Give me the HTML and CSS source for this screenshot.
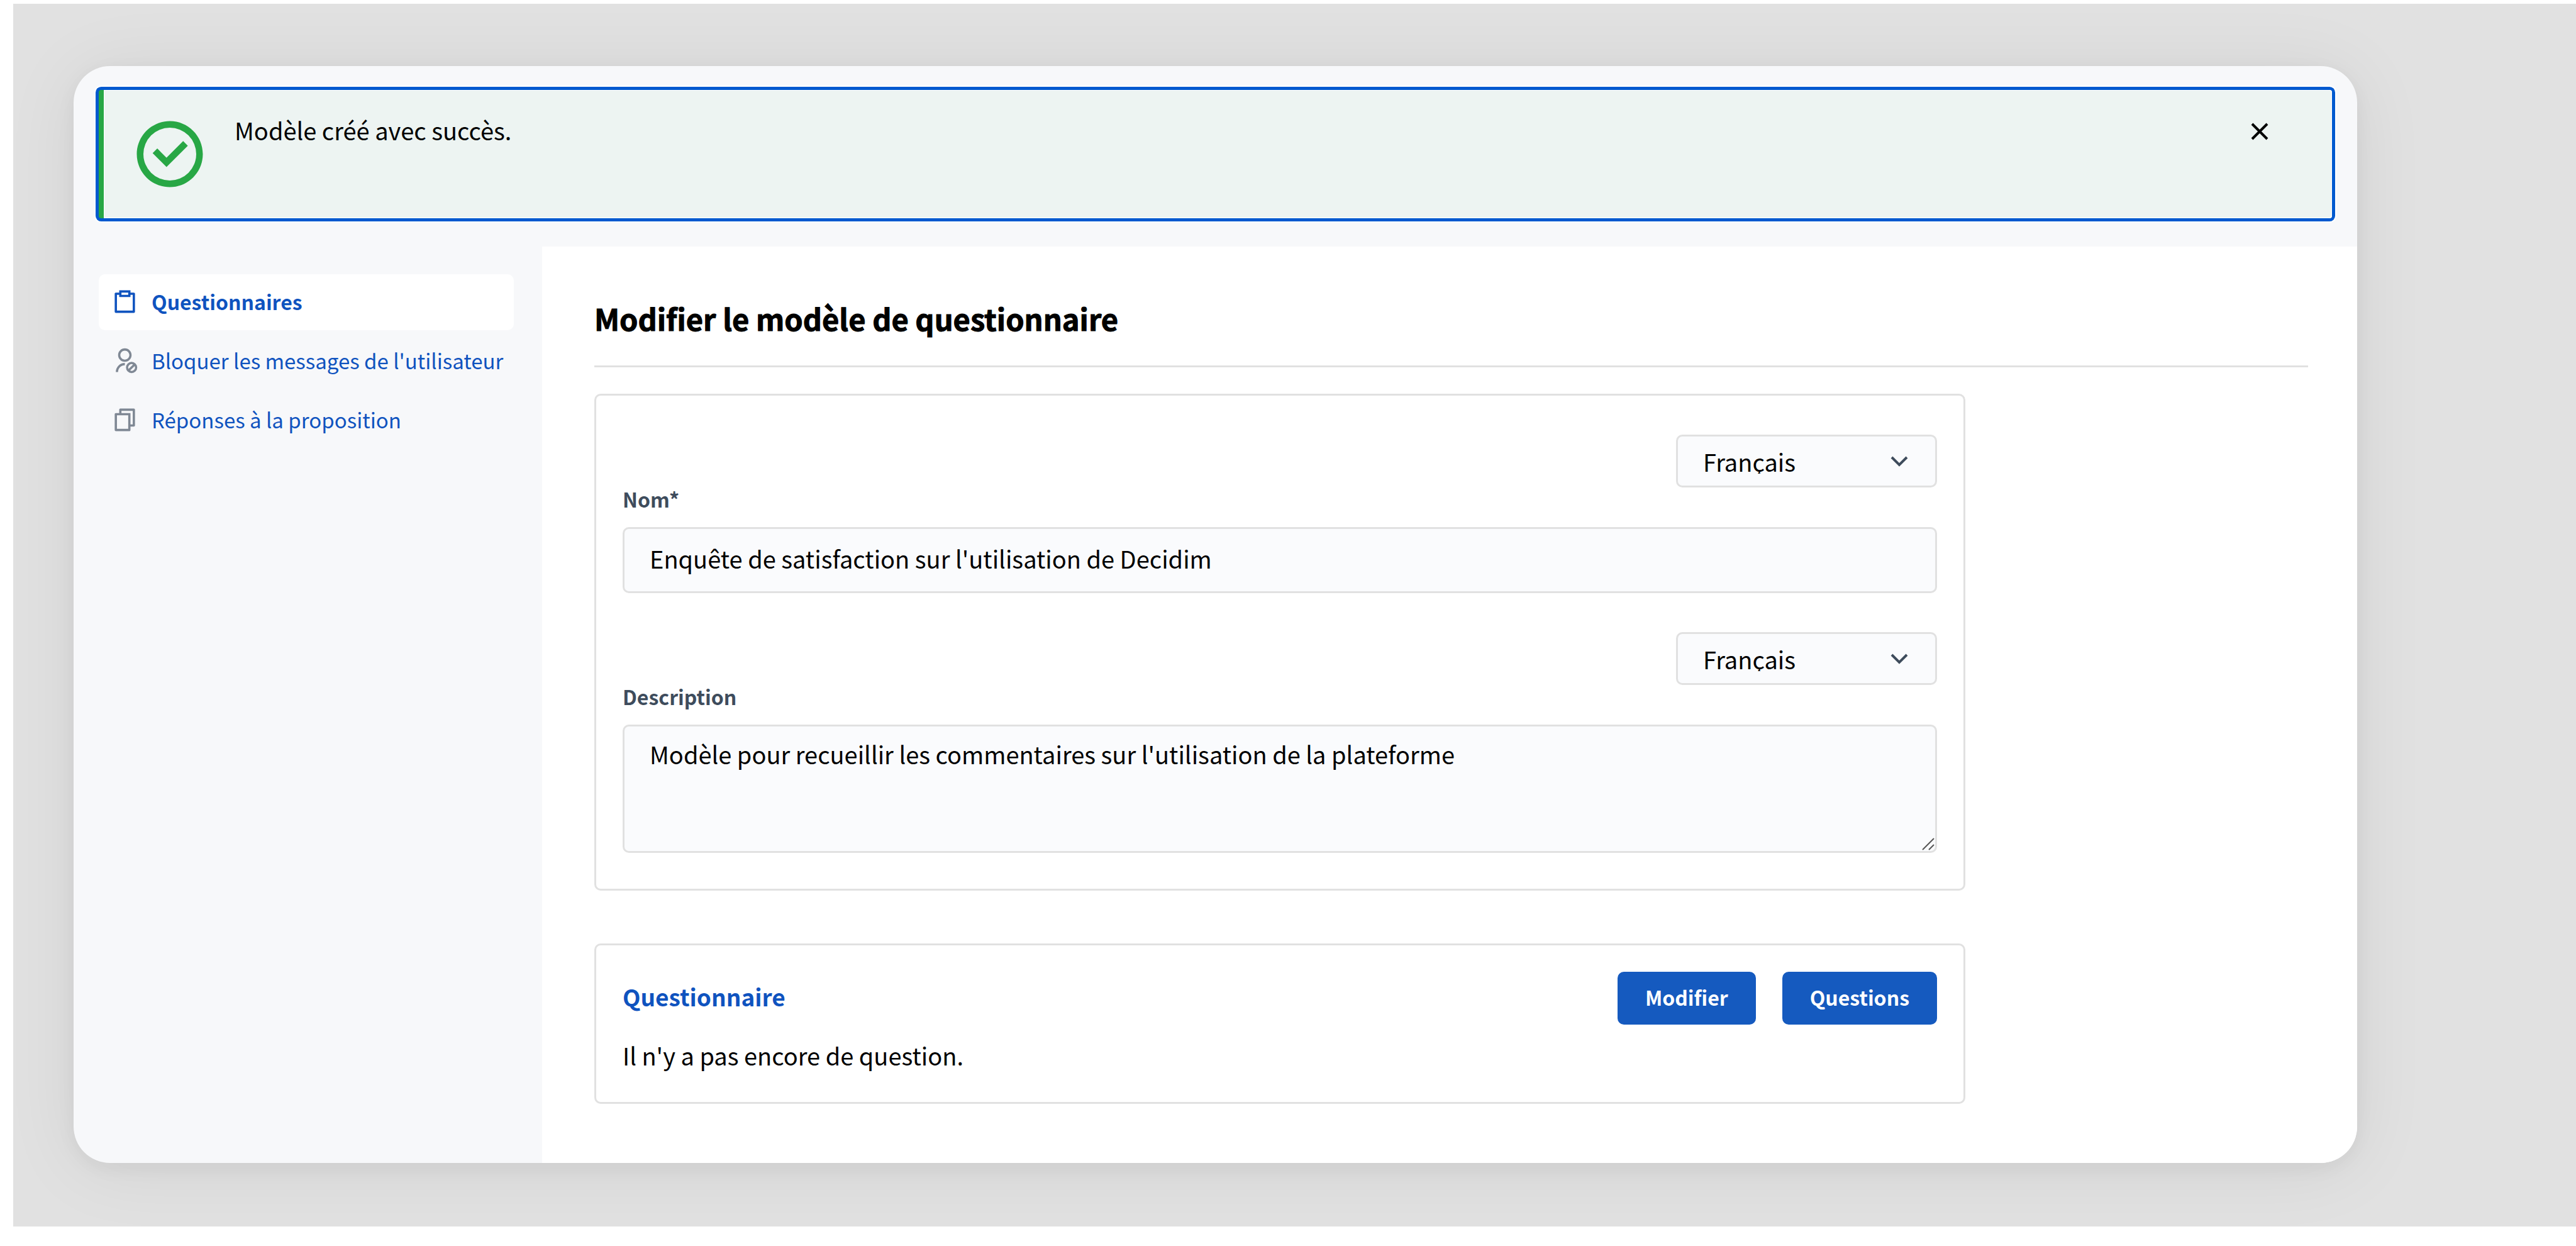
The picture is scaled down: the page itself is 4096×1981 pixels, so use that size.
FILE: index.html
```
<!DOCTYPE html>
<html lang="fr">

<head>
  <meta charset="UTF-8" />
  <meta name="viewport" content="width=device-width, initial-scale=1.0" />
  <title>Modifier le modèle de questionnaire</title>
  <link rel="stylesheet" href="styles.css">
</head>

<body>
  <div class="backdrop">
    <div class="window">

      <div class="flash" role="alert">
        <svg class="flash-icon" viewBox="0 0 24 24" aria-hidden="true">
          <path d="M12 22C6.477 22 2 17.523 2 12S6.477 2 12 2s10 4.477 10 10-4.477 10-10 10Zm0-2a8 8 0 1 0 0-16 8 8 0 0 0 0 16Z" />
          <path d="M17.457 9.457 11 15.914l-4.207-4.207 1.414-1.414L11 13.086l5.043-5.043 1.414 1.414Z" />
        </svg>
        <p class="flash-message">Modèle créé avec succès.</p>
        <button class="flash-close" type="button" aria-label="Fermer">
          <svg viewBox="0 0 28 28" aria-hidden="true">
            <path d="M2 2 26 26M26 2 2 26" />
          </svg>
        </button>
      </div>

      <div class="layout">
        <nav class="sidebar">
          <a class="nav-link active" href="#questionnaires">
            <svg viewBox="0 0 24 24" aria-hidden="true">
              <path d="M7 4V2h10v2h3.007c.548 0 .993.445.993.993v16.014a.994.994 0 0 1-.993.993H3.993A.994.994 0 0 1 3 21.007V4.993C3 4.445 3.445 4 3.993 4H7Zm0 2H5v14h14V6h-2v2H7V6Zm2-2v2h6V4H9Z" />
            </svg>
            Questionnaires
          </a>
          <a class="nav-link" href="#bloquer">
            <svg viewBox="0 0 24 24" aria-hidden="true">
              <path d="M12 13c-3.315 0-6-2.685-6-6s2.685-6 6-6 6 2.685 6 6-2.685 6-6 6Zm0-2c2.21 0 4-1.79 4-4s-1.79-4-4-4-4 1.79-4 4 1.79 4 4 4Z" />
              <path d="M12 14v2a6 6 0 0 0-6 6H4a8 8 0 0 1 8-8Z" />
              <path d="M18 23a5 5 0 1 1 0-10 5 5 0 0 1 0 10Zm-1.293-2.292a3 3 0 0 0 4.001-4.001l-4.001 4Zm-1.415-1.415 4.001-4a3 3 0 0 0-4.001 4.001Z" />
            </svg>
            Bloquer les messages de l'utilisateur
          </a>
          <a class="nav-link" href="#reponses">
            <svg viewBox="0 0 24 24" aria-hidden="true">
              <path d="M7 6V3a1 1 0 0 1 1-1h12a1 1 0 0 1 1 1v14a1 1 0 0 1-1 1h-3v3c0 .552-.45 1-1.007 1H4.007A1.001 1.001 0 0 1 3 21l.003-14c0-.552.45-1 1.007-1H7ZM5.003 8 5 20h10V8H5.003ZM9 6h8v10h2V4H9v2Z" />
            </svg>
            Réponses à la proposition
          </a>
        </nav>

        <main class="content">
          <h1>Modifier le modèle de questionnaire</h1>

          <form class="card">
            <div class="field">
              <div class="lang">
                <select aria-label="Langue du nom">
                  <option>Français</option>
                </select>
                <svg viewBox="0 0 28 18" aria-hidden="true">
                  <path d="M2 2 14 14 26 2" />
                </svg>
              </div>
              <label for="name">Nom*</label>
              <input id="name" type="text" value="Enquête de satisfaction sur l'utilisation de Decidim">
            </div>

            <div class="field">
              <div class="lang">
                <select aria-label="Langue de la description">
                  <option>Français</option>
                </select>
                <svg viewBox="0 0 28 18" aria-hidden="true">
                  <path d="M2 2 14 14 26 2" />
                </svg>
              </div>
              <label for="description">Description</label>
              <div class="textarea-wrap">
                <textarea id="description">Modèle pour recueillir les commentaires sur l'utilisation de la plateforme</textarea>
                <svg viewBox="0 0 20 20" aria-hidden="true">
                  <path d="M1 19 19 1M11 19 19 11" />
                </svg>
              </div>
            </div>
          </form>

          <section class="card questions">
            <div class="questions-header">
              <h2>Questionnaire</h2>
              <button class="button" type="button">Modifier</button>
              <button class="button" type="button">Questions</button>
            </div>
            <p>Il n'y a pas encore de question.</p>
          </section>
        </main>
      </div>

    </div>
  </div>
</body>

</html>
```

FILE: styles.css
```
* {
  box-sizing: border-box;
}

body {
  margin: 0;
  background-color: #fff;
  font-family: 'Noto Sans CJK SC', 'Noto Sans', sans-serif;
  font-size: 38px;
  line-height: 64px;
  color: #000;
}

h1,
h2,
p {
  margin: 0;
}

button,
input,
select,
textarea {
  font: inherit;
  color: inherit;
  margin: 0;
}

.backdrop {
  margin: 6px 0 0 21px;
  padding: 99px 348px 101px 96px;
  background-color: #e1e1e1;
  overflow: hidden;
}

.window {
  padding-top: 38px;
  background-color: #f7f8fa;
  border-radius: 58px;
  box-shadow: 0 8px 30px rgba(0, 0, 0, 0.05), 0 8px 120px rgba(0, 0, 0, 0.07);
}

/* Message flash */
.flash {
  display: flex;
  align-items: flex-start;
  margin: 0 40px 45px;
  min-height: 204px;
  padding: 32px 101px 32px 42px;
  background-color: #edf4f2;
  border-left: 8px solid #28a745;
  border-radius: 4px;
  box-shadow: inset 0 0 0 1px #fff, 0 0 0 5px #0059cf, 0 0 0 7px #fff;
}

.flash-icon {
  width: 126px;
  height: 126px;
  margin-top: 7px;
  fill: #28a745;
}

.flash-message {
  flex: 1;
  margin-left: 40px;
}

.flash-close {
  display: flex;
  padding: 20px 0;
  background: none;
  border: none;
  cursor: pointer;
}

.flash-close svg {
  width: 28px;
  height: 28px;
  fill: none;
  stroke: #000;
  stroke-width: 4;
}

.layout {
  display: flex;
}

/* Menu */
.sidebar {
  flex: none;
  display: flex;
  flex-direction: column;
  gap: 5px;
  width: 745px;
  padding: 44px 45px 44px 40px;
  font-size: 33px;
}

.nav-link {
  display: flex;
  align-items: center;
  gap: 21px;
  height: 89px;
  padding: 0 20px 3px;
  border-radius: 10px;
  color: #0f53bf;
  text-decoration: none;
  white-space: nowrap;
}

.nav-link svg {
  flex: none;
  width: 43px;
  height: 43px;
  fill: #7f8894;
}

.nav-link.active {
  background-color: #fff;
  font-size: 32px;
  font-weight: 700;
}

.nav-link.active svg {
  fill: #0f53bf;
}

/* Contenu */
.content {
  flex: 1;
  padding: 74px 78px 94px 83px;
  background-color: #fff;
  border-bottom-right-radius: 58px;
}

h1 {
  padding-bottom: 35px;
  margin-bottom: 42px;
  border-bottom: 3px solid #e1e1e1;
  font-size: 47px;
  line-height: 80px;
  font-weight: 700;
  -webkit-text-stroke: 1px #000;
}

.card {
  width: 80%;
  padding: 62px 42px 57px;
  border: 3px solid #e1e1e1;
  border-radius: 10px;
}

.field + .field {
  margin-top: 62px;
}

label {
  display: block;
  height: 63px;
  font-size: 32px;
  line-height: 36px;
  font-weight: 700;
  color: #3e4c5c;
}

.lang {
  position: relative;
  width: 415px;
  margin-left: auto;
}

.lang svg {
  position: absolute;
  top: 34px;
  right: 46px;
  width: 28px;
  height: 18px;
  fill: none;
  stroke: #3e4c5c;
  stroke-width: 4;
  pointer-events: none;
}

select,
input,
textarea {
  display: block;
  width: 100%;
  background-color: #fafbfd;
  border: 3px solid #e1e1e1;
  border-radius: 10px;
}

select {
  appearance: none;
  height: 84px;
  padding: 8px 40px 19px;
}

input {
  height: 105px;
  padding: 0 40px 6px;
}

.textarea-wrap {
  position: relative;
}

textarea {
  height: 204px;
  padding: 12px 40px;
  resize: none;
}

.textarea-wrap svg {
  position: absolute;
  right: 4px;
  bottom: 4px;
  width: 20px;
  height: 20px;
  fill: none;
  stroke: #555;
  stroke-width: 2;
}

.questions {
  margin-top: 84px;
  padding: 42px;
}

.questions-header {
  display: flex;
  align-items: center;
  gap: 42px;
  margin-bottom: 17px;
}

h2 {
  flex: 1;
  padding-bottom: 6px;
  font-size: 37px;
  font-weight: 700;
  color: #0f53bf;
}

.button {
  padding: 8px 44px 12px;
  background-color: #155abf;
  border: none;
  border-radius: 10px;
  color: #fff;
  font-size: 32px;
  font-weight: 700;
  cursor: pointer;
}
```
